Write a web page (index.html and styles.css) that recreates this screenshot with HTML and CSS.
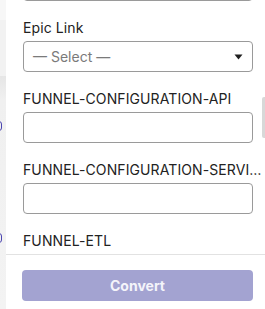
FILE: index.html
```html
<!DOCTYPE html>
<html lang="en">
<head>
    <meta charset="UTF-8">
    <meta name="viewport" content="width=device-width, initial-scale=1.0">
    <title>Convert to Jira issue</title>
    <link rel="stylesheet" href="styles.css">
</head>
<body>
    <div class="backdrop">
        <span class="backdrop-icon icon-one"></span>
        <span class="backdrop-icon icon-two"></span>
    </div>
    <div class="drawer">
        <div class="drawer-body">
            <div class="field field-cut">
                <input type="text" class="text-input">
            </div>
            <div class="field">
                <label>Epic Link</label>
                <div class="select-box">
                    <span>— Select —</span>
                    <svg width="9" height="6" viewBox="0 0 9 6"><path d="M0.5 0.5h8l-4 5z" fill="#1f1f1f"/></svg>
                </div>
            </div>
            <div class="field">
                <label>FUNNEL-CONFIGURATION-API</label>
                <input type="text" class="text-input">
            </div>
            <div class="field">
                <label title="FUNNEL-CONFIGURATION-SERVICE">FUNNEL-CONFIGURATION-SERVI…</label>
                <input type="text" class="text-input">
            </div>
            <div class="field">
                <label>FUNNEL-ETL</label>
                <input type="text" class="text-input">
            </div>
            <span class="scroll-thumb"></span>
        </div>
        <div class="drawer-footer">
            <button class="convert-btn" disabled>Convert</button>
        </div>
    </div>
</body>
</html>
```

FILE: styles.css
```css
* {
    box-sizing: border-box;
}
body {
    margin: 0;
    height: 309px;
    display: flex;
    background-color: #f4f4f5;
    font-family: Inter, "Noto Sans", sans-serif;
    overflow: hidden;
}
.backdrop {
    position: relative;
    width: 6px;
    flex-shrink: 0;
    background: linear-gradient(to bottom, #f7f7f7 0, #f7f7f7 20px, #f2f2f2 20px, #f2f2f2 76px, #e6e6e6 76px, #f0f0f0 100px, #f3f3f3 100%);
}
.backdrop-icon {
    position: absolute;
    left: -8px;
    width: 10px;
    height: 10px;
    border: 1.5px solid #4b45b0;
    border-radius: 3px;
}
.icon-one {
    top: 121px;
}
.icon-two {
    top: 233px;
}
.drawer {
    flex: 1;
    min-width: 0;
    display: flex;
    flex-direction: column;
    background: white;
    box-shadow: -2px 0 4px rgba(0, 0, 0, 0.06);
}
.drawer-body {
    position: relative;
    height: 254px;
    overflow: hidden;
    padding: 0 12px 0 17px;
    display: flex;
    flex-direction: column;
    gap: 17px;
}
.field {
    display: flex;
    flex-direction: column;
    flex-shrink: 0;
    min-width: 0;
}
.field-cut {
    margin-top: -30px;
}
.field label {
    font-size: 14px;
    line-height: 20px;
    color: #222;
    letter-spacing: 0.1px;
    margin-bottom: 3px;
    white-space: nowrap;
}
.text-input {
    height: 31px;
    width: 100%;
    border: 1px solid #9a9a9a;
    border-radius: 4px;
    background: white;
    font-size: 14px;
}
.select-box {
    height: 31px;
    display: flex;
    align-items: center;
    justify-content: space-between;
    padding: 0 9px 0 9px;
    border: 1px solid #9a9a9a;
    border-radius: 4px;
    font-size: 14px;
    color: #7a7a7a;
}
.scroll-thumb {
    position: absolute;
    right: 0;
    top: 97px;
    width: 3px;
    height: 41px;
    background: #d8d8d8;
    border-radius: 2px 0 0 2px;
}
.drawer-footer {
    border-top: 1px solid #e2e2e2;
    padding: 15px 12px 8px 16px;
}
.convert-btn {
    width: 100%;
    height: 31px;
    border: none;
    border-radius: 4px;
    background-color: #a3a3d1;
    color: #f4f4fa;
    font-family: Inter, "Noto Sans", sans-serif;
    font-size: 14px;
    font-weight: bold;
}
```
